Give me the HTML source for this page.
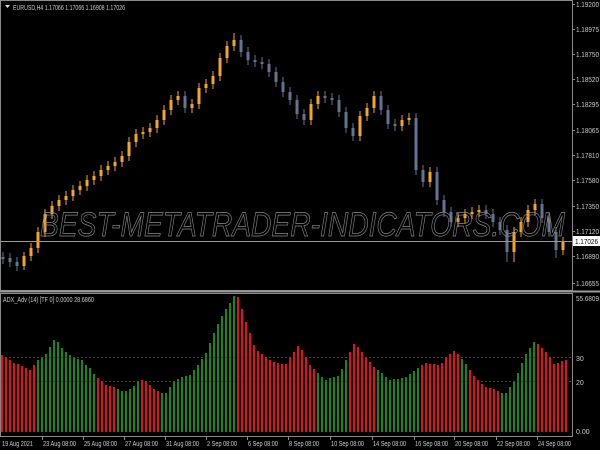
<!DOCTYPE html><html><head><meta charset="utf-8"><style>
html,body{margin:0;padding:0;background:#000;width:600px;height:450px;overflow:hidden}
svg{display:block}
text{font-family:"Liberation Sans",sans-serif;font-size:7px;fill:#c8c8c8}
</style></head><body>
<svg width="600" height="450" xmlns="http://www.w3.org/2000/svg">
<rect x="0" y="0" width="600" height="450" fill="#000"/>
<!-- candles: wicks -->
<path fill="none" stroke="#f5a623" stroke-width="1" d="M24 270V252M31 261V243M38 253V227M45 237V209M52 219V201M59 211V195M66 205V191M73 201V185M80 195V181M87 191V175M94 185V171M101 181V165M108 175V161M115 171V157M122 167V151M129 161V137M136 147V129M143 139V127M150 137V123M157 133V115M164 125V105M171 115V95M178 105V91M192 113V99M199 109V83M206 93V79M213 89V71M220 81V53M227 63V41M234 51V33M311 125V99M318 109V91M360 141V111M367 121V103M374 113V91M402 131V115M409 125V113M430 187V167M458 227V213M465 223V209M472 219V207M479 217V205M514 262V227M521 237V217M528 227V205M535 215V199M563 255V237"/>
<path fill="none" stroke="#5f7590" stroke-width="1" d="M3 252V264M10 253V267M17 257V271M185 91V113M241 35V57M248 47V65M255 55V67M262 57V69M269 59V77M276 67V87M283 77V97M290 87V105M297 95V119M304 109V125M325 91V103M332 93V105M339 95V117M346 107V133M353 123V141M381 91V115M388 105V129M395 119V131M416 113V175M423 165V187M437 167V205M444 195V217M451 207V227M486 205V219M493 209V227M500 217V235M507 225V262M542 199V223M549 213V237M556 227V258"/>
<!-- candles: bodies -->
<path fill="none" stroke="#f5a623" stroke-width="3" d="M24 266V256M31 256V248M38 248V232M45 232V214M52 214V206M59 206V200M66 200V196M73 196V190M80 190V186M87 186V180M94 180V176M101 176V170M108 170V166M115 166V162M122 162V156M129 156V142M136 142V134M143 134V132M150 132V128M157 128V120M164 120V110M171 110V100M178 100V96M192 108V104M199 104V88M206 88V84M213 84V76M220 76V58M227 58V46M234 46V40M311 120V104M318 104V96M360 136V116M367 116V108M374 108V96M402 126V120M409 120V118M430 182V172M458 222V218M465 218V214M472 214V212M479 212V210M514 252V232M521 232V222M528 222V210M535 210V204M563 250V242"/>
<path fill="none" stroke="#5f7590" stroke-width="3" d="M3 257V259M10 258V262M17 262V266M185 96V108M241 40V52M248 52V60M255 60V62M262 62V64M269 64V72M276 72V82M283 82V92M290 92V100M297 100V114M304 114V120M325 96V98M332 98V100M339 100V112M346 112V128M353 128V136M381 96V110M388 110V124M395 124V126M416 118V170M423 170V182M437 172V200M444 200V212M451 212V222M486 210V214M493 214V222M500 222V230M507 230V252M542 204V218M549 218V232M556 232V250"/>
<!-- histogram -->
<path fill="none" stroke="#e81010" stroke-width="2" d="M2 432V355M6 432V358M10 432V360M14 432V363M18 432V364M22 432V366M26 432V368M30 432V370M34 432V365M98 432V378M102 432V382M106 432V385M110 432V386M114 432V387M142 432V380M146 432V381M150 432V385M154 432V389M158 432V391M238 432V297M242 432V309M246 432V322M250 432V333M254 432V345M258 432V351M262 432V354M266 432V357M270 432V360M274 432V362M278 432V363M282 432V364M286 432V364M290 432V357M294 432V352M298 432V346M302 432V350M306 432V357M310 432V365M314 432V369M350 432V352M354 432V344M358 432V347M362 432V352M366 432V357M370 432V362M374 432V367M422 432V365M426 432V363M430 432V364M434 432V364M438 432V365M442 432V363M446 432V358M450 432V354M454 432V351M458 432V354M470 432V370M474 432V376M478 432V380M482 432V384M486 432V387M490 432V388M494 432V389M498 432V391M538 432V344M542 432V348M546 432V352M550 432V358M554 432V364M558 432V363M562 432V361M566 432V360"/>
<path fill="none" stroke="#128c12" stroke-width="2" d="M38 432V360M42 432V357M46 432V354M50 432V347M54 432V340M58 432V342M62 432V348M66 432V352M70 432V355M74 432V357M78 432V359M82 432V360M86 432V365M90 432V368M94 432V374M118 432V389M122 432V391M126 432V391M130 432V389M134 432V386M138 432V382M162 432V393M166 432V393M170 432V387M174 432V381M178 432V379M182 432V377M186 432V376M190 432V375M194 432V370M198 432V365M202 432V359M206 432V353M210 432V343M214 432V333M218 432V324M222 432V316M226 432V309M230 432V303M234 432V296M318 432V373M322 432V377M326 432V380M330 432V378M334 432V377M338 432V376M342 432V369M346 432V360M378 432V370M382 432V373M386 432V377M390 432V380M394 432V379M398 432V379M402 432V378M406 432V377M410 432V374M414 432V371M418 432V368M462 432V359M466 432V364M502 432V393M506 432V393M510 432V387M514 432V381M518 432V373M522 432V363M526 432V354M530 432V348M534 432V342"/>
<!-- frame -->
<rect x="0.5" y="0.5" width="572" height="290" fill="none" stroke="#8a8a8a"/>
<rect x="0.5" y="293.5" width="572" height="143" fill="none" stroke="#8a8a8a"/>
<line x1="0" y1="291.5" x2="600" y2="291.5" stroke="#9a9a9a" stroke-width="2"/>
<line x1="1" y1="241.5" x2="572" y2="241.5" stroke="#9a9a9a" stroke-width="1"/>
<line x1="1" y1="357.5" x2="572" y2="357.5" stroke="#2e4e7a" stroke-dasharray="2,2"/>
<line x1="1" y1="381.5" x2="572" y2="381.5" stroke="#2e4e7a" stroke-dasharray="2,2"/>
<text x="40" y="236" style="font-size:34px;font-style:italic;fill:none;stroke:#8a8a8a;stroke-width:0.7" textLength="525" lengthAdjust="spacingAndGlyphs">BEST-METATRADER-INDICATORS.COM</text>
<polygon points="5,5 10,5 7.5,8" fill="#ddd"/>
<text x="13" y="10" textLength="112" lengthAdjust="spacingAndGlyphs">EURUSD,H4  1.17066 1.17066 1.16908 1.17026</text>
<text x="3" y="302" textLength="91" lengthAdjust="spacingAndGlyphs">ADX_Adv (14) [TF 0] 0.0000 28.6860</text>
<!-- price axis -->
<path stroke="#8a8a8a" fill="none" d="M572 4.5H575M572 29.5H575M572 54.5H575M572 79.5H575M572 104.5H575M572 130.5H575M572 155.5H575M572 180.5H575M572 206.5H575M572 231.5H575M572 256.5H575M572 283.5H575"/>
<g>
<text x="576" y="7" textLength="23" lengthAdjust="spacingAndGlyphs">1.19200</text>
<text x="576" y="32" textLength="23" lengthAdjust="spacingAndGlyphs">1.18975</text>
<text x="576" y="57" textLength="23" lengthAdjust="spacingAndGlyphs">1.18750</text>
<text x="576" y="82" textLength="23" lengthAdjust="spacingAndGlyphs">1.18520</text>
<text x="576" y="107" textLength="23" lengthAdjust="spacingAndGlyphs">1.18295</text>
<text x="576" y="133" textLength="23" lengthAdjust="spacingAndGlyphs">1.18065</text>
<text x="576" y="158" textLength="23" lengthAdjust="spacingAndGlyphs">1.17810</text>
<text x="576" y="183" textLength="23" lengthAdjust="spacingAndGlyphs">1.17580</text>
<text x="576" y="209" textLength="23" lengthAdjust="spacingAndGlyphs">1.17350</text>
<text x="576" y="234" textLength="23" lengthAdjust="spacingAndGlyphs">1.17120</text>
<text x="576" y="259" textLength="23" lengthAdjust="spacingAndGlyphs">1.16890</text>
<text x="576" y="286" textLength="23" lengthAdjust="spacingAndGlyphs">1.16655</text>
<text x="576" y="301" textLength="23" lengthAdjust="spacingAndGlyphs">55.6809</text>
<text x="576" y="361">30</text>
<text x="576" y="385">20</text>
<text x="576" y="434">0.00</text>
</g>
<rect x="573" y="236" width="27" height="10" fill="#fff"/>
<text x="575" y="244" style="fill:#000" textLength="23" lengthAdjust="spacingAndGlyphs">1.17026</text>
<!-- time axis -->
<path stroke="#8a8a8a" fill="none" d="M42.5 437V440M83.5 437V440M124.5 437V440M165.5 437V440M206.5 437V440M247.5 437V440M288.5 437V440M330.5 437V440M372.5 437V440M414.5 437V440M454.5 437V440M496.5 437V440M537.5 437V440"/>
<text x="2" y="446" textLength="31" lengthAdjust="spacingAndGlyphs">19 Aug 2021</text>
<text x="43" y="446" textLength="33" lengthAdjust="spacingAndGlyphs">23 Aug 08:00</text>
<text x="84" y="446" textLength="33" lengthAdjust="spacingAndGlyphs">25 Aug 08:00</text>
<text x="125" y="446" textLength="33" lengthAdjust="spacingAndGlyphs">27 Aug 08:00</text>
<text x="166" y="446" textLength="33" lengthAdjust="spacingAndGlyphs">31 Aug 08:00</text>
<text x="207" y="446" textLength="30" lengthAdjust="spacingAndGlyphs">2 Sep 08:00</text>
<text x="248" y="446" textLength="30" lengthAdjust="spacingAndGlyphs">6 Sep 08:00</text>
<text x="289" y="446" textLength="30" lengthAdjust="spacingAndGlyphs">8 Sep 08:00</text>
<text x="331" y="446" textLength="33" lengthAdjust="spacingAndGlyphs">10 Sep 08:00</text>
<text x="373" y="446" textLength="33" lengthAdjust="spacingAndGlyphs">14 Sep 08:00</text>
<text x="415" y="446" textLength="33" lengthAdjust="spacingAndGlyphs">16 Sep 08:00</text>
<text x="455" y="446" textLength="33" lengthAdjust="spacingAndGlyphs">20 Sep 08:00</text>
<text x="497" y="446" textLength="33" lengthAdjust="spacingAndGlyphs">22 Sep 08:00</text>
<text x="538" y="446" textLength="33" lengthAdjust="spacingAndGlyphs">24 Sep 08:00</text>
</svg>
</body></html>
